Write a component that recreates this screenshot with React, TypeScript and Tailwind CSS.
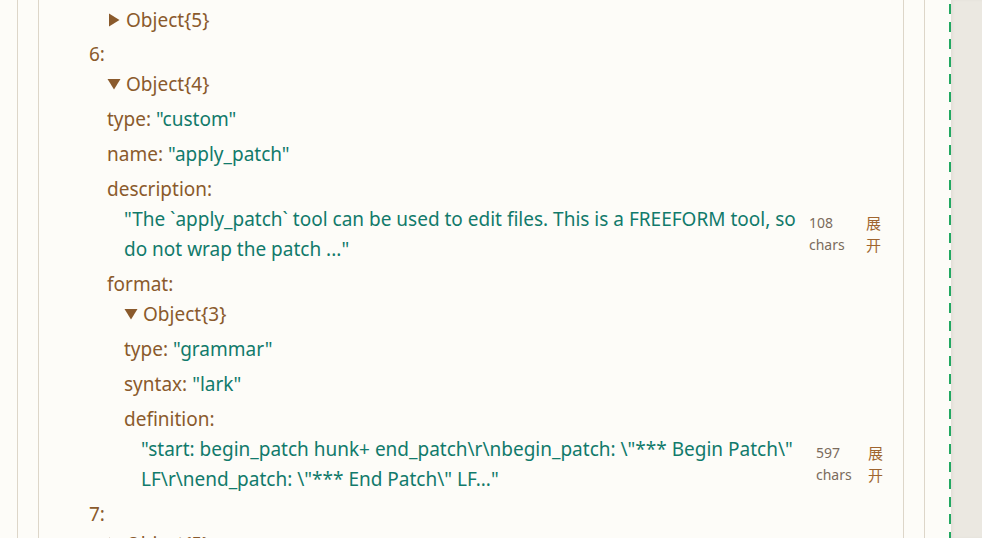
import React from "react";

const KEY = "text-[#8a5a2c]";
const STR = "text-[#117a6b]";

function Toggle({ open, label }: { open: boolean; label: string }) {
  return (
    <div className={`flex h-[30px] items-center ${KEY}`}>
      <span className="mr-[5px] flex w-[14px] items-center justify-center">
        {open ? (
          <svg width="14" height="12" viewBox="0 0 14 12">
            <polygon points="0.5,1 13.5,1 7,11.5" fill="#8a5a2c" />
          </svg>
        ) : (
          <svg width="12" height="14" viewBox="0 0 12 14">
            <polygon points="1,0.5 11.5,7 1,13.5" fill="#8a5a2c" />
          </svg>
        )}
      </span>
      <span>{label}</span>
    </div>
  );
}

function KV({ k, v }: { k: string; v: string }) {
  return (
    <div className="mt-[5px] h-[30px] leading-[30px] whitespace-nowrap">
      <span className={KEY}>{k}: </span>
      <span className={STR}>{v}</span>
    </div>
  );
}

function LongValue({
  k,
  lines,
  count,
  charsW,
  pr,
}: {
  k: string;
  lines: string[];
  count: string;
  charsW: string;
  pr: string;
}) {
  return (
    <div className="mt-[5px]">
      <div className={`h-[30px] leading-[30px] ${KEY}`}>{k}:</div>
      <div className={`flex items-center pl-[17px] ${pr}`}>
        <div className={`min-w-0 flex-1 ${STR}`}>
          {lines.map((l, i) => (
            <div key={i} className="h-[30px] leading-[30px] whitespace-nowrap">
              {l}
            </div>
          ))}
        </div>
        <div className={`${charsW} shrink-0 text-[14px] leading-[22px] text-[#7b6b5c]`}>
          <div>{count}</div>
          <div>chars</div>
        </div>
        <div className="w-[15px] shrink-0 text-[15px] leading-[22px] text-[#a0652f] [font-family:'Noto_Sans_CJK_SC',sans-serif]">
          展开
        </div>
      </div>
    </div>
  );
}

export default function App() {
  return (
    <div className="flex h-[538px] w-[982px] overflow-hidden bg-[#fdfcf8] text-[19px] [font-family:'Noto_Sans','Noto_Sans_CJK_SC',sans-serif]">
      <div className="flex h-full w-[949px] shrink-0">
        <div className="ml-[17px] h-full w-[908px] border-x border-[#ddd6c9]">
          <div className="ml-[20px] h-full w-[866px] border-x border-[#ddd6c9]">
            <div className="pl-[50px] pt-[5px]">
              <div className="pl-[18px]">
                <Toggle open={false} label="Object{5}" />
              </div>
              <div className="mt-[4px]">
                <div className={`h-[30px] leading-[30px] ${KEY}`}>6:</div>
                <div className="pl-[18px]">
                  <Toggle open={true} label="Object{4}" />
                  <KV k="type" v={'"custom"'} />
                  <KV k="name" v={'"apply_patch"'} />
                  <LongValue
                    k="description"
                    lines={[
                      '"The `apply_patch` tool can be used to edit files. This is a FREEFORM tool, so',
                      'do not wrap the patch ..."',
                    ]}
                    count="108"
                    charsW="w-[57px]"
                    pr="pr-[22px]"
                  />
                  <div className="mt-[5px]">
                    <div className={`h-[30px] leading-[30px] ${KEY}`}>format:</div>
                    <div className="pl-[17px]">
                      <Toggle open={true} label="Object{3}" />
                      <KV k="type" v={'"grammar"'} />
                      <KV k="syntax" v={'"lark"'} />
                      <LongValue
                        k="definition"
                        lines={[
                          '"start: begin_patch hunk+ end_patch\\r\\nbegin_patch: \\"*** Begin Patch\\"',
                          'LF\\r\\nend_patch: \\"*** End Patch\\" LF..."',
                        ]}
                        count="597"
                        charsW="w-[52px]"
                        pr="pr-[20px]"
                      />
                    </div>
                  </div>
                </div>
              </div>
              <div className="mt-[5px]">
                <div className={`h-[30px] leading-[30px] ${KEY}`}>7:</div>
                <div className="pl-[18px]">
                  <Toggle open={false} label="Object{5}" />
                </div>
              </div>
            </div>
          </div>
        </div>
      </div>
      <div className="h-full w-[2px] shrink-0 bg-[repeating-linear-gradient(to_bottom,transparent_0px,transparent_4px,#22a861_4px,#22a861_14px,transparent_14px,transparent_17.6px)]" />
      <div className="h-full flex-1 bg-[#ebe8e1] shadow-[inset_2px_0_3px_rgba(0,0,0,0.04)]" />
    </div>
  );
}
